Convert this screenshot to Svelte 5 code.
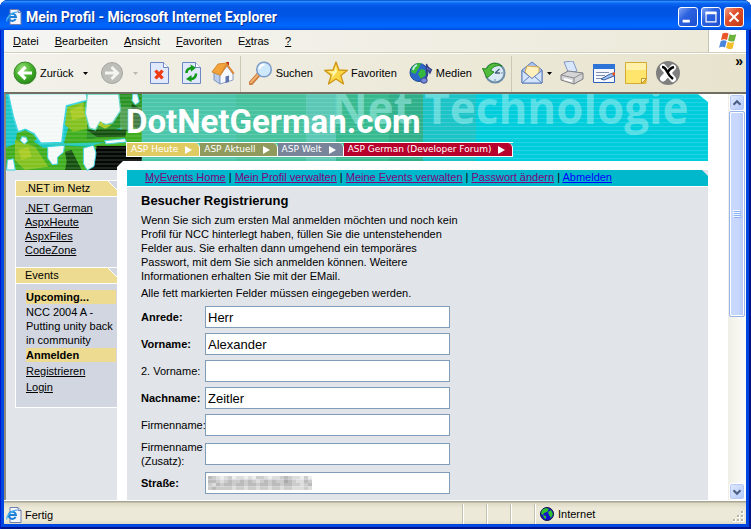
<script>
  const menus = [
    ['', 'D', 'atei'],
    ['', 'B', 'earbeiten'],
    ['', 'A', 'nsicht'],
    ['', 'F', 'avoriten'],
    ['E', 'x', 'tras'],
    ['', '?', '']
  ];
  const tabs = [
    { text: 'ASP Heute', color: '#dfcb62' },
    { text: 'ASP Aktuell', color: '#8f9a5c' },
    { text: 'ASP Welt', color: '#77849a' },
    { text: 'ASP German (Developer Forum)', color: '#b8002c' }
  ];
  const account = [
    { text: 'MyEvents Home', visited: true },
    { text: 'Mein Profil verwalten', visited: true },
    { text: 'Meine Events verwalten', visited: true },
    { text: 'Passwort ändern', visited: true },
    { text: 'Abmelden', visited: false }
  ];
  const netLinks = ['.NET German', 'AspxHeute', 'AspxFiles', 'CodeZone'];
  const fields = [
    { id: 'anrede', label: 'Anrede:', value: 'Herr', bold: true },
    { id: 'vorname', label: 'Vorname:', value: 'Alexander', bold: true },
    { id: 'vorname2', label: '2. Vorname:', value: '' },
    { id: 'nachname', label: 'Nachname:', value: 'Zeitler', bold: true },
    { id: 'firma', label: 'Firmenname:', value: '' },
    { id: 'zusatz', label: 'Firmenname (Zusatz):', value: '' },
    { id: 'strasse', label: 'Straße:', value: '', bold: true, masked: true }
  ];
  // grey level of every 4px block of the masked street, row by row
  const mosaic = [
    'bcdedceddedeccdeddcbcddece',
    'bbcdcbccbcbcdcbcbccabcddbc',
    'cdbcbbcbbcbbcbbcbbcbbccdcb',
    'cbccccdccdccdccdccdccdddcd'
  ];
</script>

{#snippet ieIcon()}
  <svg class="ie" viewBox="0 0 16 16" aria-hidden="true">
    <path d="M4 .5h8l3 3v12H4z" fill="#f4f6ff" stroke="#6f7fae" />
    <path d="M12 .5v3h3" fill="#cdd6ee" stroke="#6f7fae" />
    <path d="M9.600 9.800A3.600 3.600 0 1 1 9.900 7.900H3.300" fill="none" stroke="#1d7fd8" stroke-width="2" />
    <path d="M1 12.500C-.5 9 6 3 11 3.200" fill="none" stroke="#4ab2f0" stroke-width="1.200" />
  </svg>
{/snippet}

{#snippet caret(dim)}
  <svg class="caret" viewBox="0 0 5 3" aria-hidden="true"><path d="M0 0h5L2.500 3z" fill={dim ? '#b9b7a9' : '#000'} /></svg>
{/snippet}

<div class="window">
  <header class="title">
    {@render ieIcon()}
    <h1>Mein Profil - Microsoft Internet Explorer</h1>
    <button class="cap" aria-label="Minimieren"><svg viewBox="0 0 20 20"><path d="M4 13h8v3H4z" fill="#fff" /></svg></button>
    <button class="cap" aria-label="Maximieren"><svg viewBox="0 0 20 20"><path d="M4.500 5h11v10.500h-11z" fill="none" stroke="#fff" stroke-width="1.300" /><path d="M4 4h12v3H4z" fill="#fff" /></svg></button>
    <button class="cap close" aria-label="Schließen"><svg viewBox="0 0 20 20"><path d="M5 5l10 10M15 5L5 15" stroke="#fff" stroke-width="2.200" /></svg></button>
  </header>

  <div class="menubar">
    <nav class="menus" aria-label="Menü">
      {#each menus as [a, k, b]}<button>{a}<u>{k}</u>{b}</button>{/each}
    </nav>
    <div class="flag">
      <svg viewBox="0 0 20 18" aria-hidden="true">
        <path d="M4.500 1.500q3-1.700 6 0L9 8q-3-1.600-6 .2z" fill="#e8562a" />
        <path d="M11.500 2.200q3 1.500 6.800 0L16.500 9q-3 1.300-6.500-.4z" fill="#6cb33e" />
        <path d="M2.700 9.200q3-1.700 6-.1L7 15.600q-3-1.500-6 .1z" fill="#4a86dc" />
        <path d="M9.700 9.800q3 1.500 6.500.3L14.600 16.600q-3 1.400-6.500-.5z" fill="#f4bd2c" />
      </svg>
    </div>
  </div>

  <div class="toolbar">
    <button class="tool back">
      <svg viewBox="0 0 24 24" aria-hidden="true">
        <defs><radialGradient id="gr" cx=".4" cy=".3" r=".8"><stop offset="0" stop-color="#9be07a" /><stop offset=".5" stop-color="#45b02c" /><stop offset="1" stop-color="#1f7a14" /></radialGradient></defs>
        <circle cx="12" cy="12" r="11" fill="url(#gr)" stroke="#3c8a2c" />
        <path d="M19 12H7M12.500 6L6.500 12l6 6" fill="none" stroke="#fff" stroke-width="3.200" />
      </svg>
      Zurück {@render caret(false)}
    </button>
    <button class="tool fwd" aria-label="Vorwärts">
      <svg viewBox="0 0 24 24" aria-hidden="true">
        <circle cx="12" cy="12" r="10.500" fill="#bdbdb9" stroke="#a5a5a0" />
        <path d="M5 12h12M11.500 6l6 6-6 6" fill="none" stroke="#f4f4f0" stroke-width="3" />
      </svg>
      {@render caret(true)}
    </button>
    <button class="tool" aria-label="Abbrechen">
      <svg viewBox="0 0 24 24" aria-hidden="true">
        <path d="M3.500 1.500h13l5 5v16h-18z" fill="#dfe9fb" stroke="#6d86c4" /><path d="M16.500 1.500v5h5" fill="#fff" stroke="#6d86c4" />
        <path d="M8.500 9.500l7 8M15.500 9.500l-7 8" stroke="#f03a12" stroke-width="3.400" />
      </svg>
    </button>
    <button class="tool refresh" aria-label="Aktualisieren">
      <svg viewBox="0 0 24 24" aria-hidden="true">
        <path d="M3.500 1.500h13l5 5v16h-18z" fill="#dfe9fb" stroke="#6d86c4" /><path d="M16.500 1.500v5h5" fill="#fff" stroke="#6d86c4" />
        <path d="M7.500 12q0-4.500 5-5" fill="none" stroke="#159a1c" stroke-width="2.600" /><path d="M11.500 3.500l5.500 3.200-5 4z" fill="#159a1c" />
        <path d="M17 12.500q0 5-5 5.500" fill="none" stroke="#159a1c" stroke-width="2.600" /><path d="M12.500 14v7l-5.500-3z" fill="#159a1c" />
      </svg>
    </button>
    <button class="tool home" aria-label="Startseite">
      <svg viewBox="0 0 24 24" aria-hidden="true">
        <path d="M15 1h3v7h-3z" fill="#b82814" />
        <path d="M3 12l6 2v9l-6-4z" fill="#b9cdee" stroke="#7e92bc" /><path d="M9 14l7-9 6 8v6L9 23z" fill="#f5f8ff" stroke="#8c9fc6" />
        <path d="M1 11L7 3l9-1-7 12z" fill="#f2a33a" stroke="#d98a2c" /><path d="M16 2l7.500 10-1.500 1.500L16 5 9.500 15 8.500 14z" fill="#dd8a32" />
        <path d="M14.500 15.500l3.500-1v6.500l-3.500 1z" fill="#5d74ad" />
      </svg>
    </button>
    <span class="sep"></span>
    <button class="tool search">
      <svg viewBox="0 0 24 24" aria-hidden="true">
        <path d="M2 22l8-9" stroke="#c87a38" stroke-width="4.500" stroke-linecap="round" /><path d="M2 21.500l8-9" stroke="#f0b070" stroke-width="2" stroke-linecap="round" />
        <circle cx="15" cy="8.500" r="7.300" fill="#cfe9fc" stroke="#7c9cc8" stroke-width="1.500" /><path d="M10.500 8q1-4.500 5-4.500" stroke="#fff" stroke-width="2" fill="none" />
      </svg>
      Suchen
    </button>
    <button class="tool star">
      <svg viewBox="0 0 24 24" aria-hidden="true"><path d="M12 1l3 8 8.500.3-6.600 5.300L19.500 23 12 18l-7.500 5 2.600-8.400L.5 9.300 9 9z" fill="#fbd745" stroke="#cf9414" stroke-width="1.300" stroke-linejoin="round" /><path d="M12 5l1 6-6 7 2-5-5-3 6 .5z" fill="#fff6b0" /></svg>
      Favoriten
    </button>
    <button class="tool media">
      <svg viewBox="0 0 24 24" aria-hidden="true">
        <circle cx="10" cy="11.500" r="9" fill="#2b67c8" stroke="#1b4790" /><path d="M3 6q4-4.500 9-4l-2 5-4 6-4-2zM12 8l4 1 1 5-5 4-3-5z" fill="#35b93a" /><path d="M4 9q1-4 4-5" stroke="#c9ecf8" stroke-width="1.800" fill="none" />
        <path d="M17.500 19V3q1 4 5 5.500L21 12q-1-3-3-3" fill="#6b7fd0" stroke="#353f86" stroke-width="1.300" /><ellipse cx="15" cy="19.500" rx="3.200" ry="2.700" fill="#7789da" stroke="#353f86" />
      </svg>
      Medien
    </button>
    <button class="tool hist" aria-label="Verlauf">
      <svg viewBox="0 0 24 24" aria-hidden="true">
        <circle cx="13" cy="12" r="9.500" fill="#d8e9f5" stroke="#6c8da8" stroke-width="2" /><path d="M13 12l4.500-4M13 12h5" stroke="#49617c" stroke-width="1.300" /><path d="M13 4v2M21 12h-2M13 20v-2" stroke="#6b88a5" />
        <path d="M20 5Q10-2 4 8l-3.500-.5L5 17l7-6-3.500-1.500Q12 3 20 5z" fill="#52bd3d" stroke="#278420" />
      </svg>
    </button>
    <span class="sep"></span>
    <button class="tool mail" aria-label="E-Mail">
      <svg viewBox="0 0 24 24" aria-hidden="true">
        <path d="M2 9L12 1l10 8v13H2z" fill="#a9c4f2" stroke="#5d7cbd" /><path d="M5 11l2-6 12 1v9l-7 3z" fill="#fff0bc" stroke="#d6a850" /><path d="M2 9.500l10 8 10-8V22H2z" fill="#d4e4fb" stroke="#5d7cbd" /><path d="M2 22l8-7M22 22l-8-7" stroke="#5d7cbd" />
      </svg>
      {@render caret(false)}
    </button>
    <button class="tool print" aria-label="Drucken">
      <svg viewBox="0 0 24 24" aria-hidden="true">
        <path d="M4 1l9-1 4 10-8 3z" fill="#d9e7fc" stroke="#7f96c2" /><path d="M1 14l7-4 15 2v6l-9 5L1 19z" fill="#d5d5d5" stroke="#7d7d82" /><path d="M1 14l13 3 9-5M14 17v6" fill="none" stroke="#8b8b90" /><path d="M4 18l8 2" stroke="#fff" stroke-width="2" />
      </svg>
    </button>
    <button class="tool edit" aria-label="Bearbeiten">
      <svg viewBox="0 0 24 24" aria-hidden="true">
        <path d="M1.500 3.500h21v18h-21z" fill="#f5f8ff" stroke="#2c5db8" /><path d="M1 3h22v5H1z" fill="#2d74d6" /><path d="M4 11.500h13M4 14.500h9M4 17.500h6" stroke="#7f8fae" /><path d="M9 18l9-5 4-1v3l-10 4z" fill="#9ec4f5" stroke="#3d5c9c" /><path d="M20 12l3-1v3l-2 1z" fill="#e0552c" />
      </svg>
    </button>
    <button class="tool note" aria-label="Notiz">
      <svg viewBox="0 0 24 24" aria-hidden="true"><path d="M1.500 1.500h21v16l-1 5h-20z" fill="#ffe56c" stroke="#d3ac35" /><path d="M2 2h20v7H2z" fill="#fff2a8" /><path d="M22.500 17.500h-5v5h5z" fill="#e9bb3c" /><path d="M22.500 17.500h-5v5z" fill="#fff6c4" stroke="#c49624" /></svg>
    </button>
    <button class="tool msg" aria-label="Messenger">
      <svg viewBox="0 0 24 24" aria-hidden="true">
        <circle cx="12" cy="12" r="12" fill="#7f7f7f" />
        <path d="M7 6l10 12M17 6.500L7 17.500" stroke="#fff" stroke-width="6" fill="none" stroke-linecap="round" />
        <path d="M6 6q3 0 5 4.500t6 7.500M18 6q-5 1.500-6.500 6" stroke="#000" stroke-width="2.400" fill="none" />
      </svg>
    </button>
    <button class="more" aria-label="Weitere Symbole">»</button>
  </div>

  <div class="view">
    <div class="page">
      <div class="banner">
        <svg class="art" viewBox="18 12 423 231" aria-hidden="true">
          <rect x="18" y="12" width="407" height="228" fill="#3fae1c" />
          <path d="M18 12h34l4 80-10 70-28 10zM190 30l40 0-30 100-10 38-60 6-30-20 60-30zM285 100l60 20 30-60-20-48h15l-5 118-85 10z" fill="#18c8c8" />
          <path d="M200 50l50-15 20 80-50 10-25-20zM45 150l60 20 40 60-70 10-30-30z" fill="#83c21e" />
          <path d="M210 60l35-15 12 35-40 10zM55 180l30-10 10 30-30 10z" fill="#a8cc22" />
          <path d="M265 12h160v60l-45 35-60 20-40 20-20 0zM365 12h30v110l-25 0z" fill="#2a9424" />
          <path d="M260 120l120-2-4 22-84 2zM395 40l30 20v60l-30-10zM195 185l20-5 10 20 20 40h-50l5-25z" fill="#14500e" />
          <path d="M290 168h135v72H262l20-32z" fill="#040804" />
          <path d="M24 10h234l8 20-66 18-8 54-6 56-64 2-20-28-26-14-22 8-14-44-8-36z" fill="#f6fbfa" stroke="#35d3e0" stroke-width="5" />
          <path d="M262 12h94l6 50-24 36-20 6-18-8-14 24-18-6-12-44z" fill="#f6fbfa" stroke="#5fd6c0" stroke-width="4" />
          <path d="M294 106l8-12 10 10 24 0-20 12z" fill="#a8cc22" />
          <path d="M398 12h14l6 24-12 8-10-12zM314 152l60-6 6 10-62 6zM65 140l14 2 4 12-10 8-12-10zM143 170l50-4-2 20-18 16 0 20-16 2-14-20zM250 175l30-10 8 24-6 40-20 12-12-20zM22 210l18-4 6 34H20z" fill="#f6fbfa" stroke="#35d3e0" stroke-width="3" />
          <path d="M360 50h65v70h-65z" fill="#7fb48a" opacity=".45" />
          <path d="M120 162l140 8 60-14-60 2z" fill="#1cc6b6" />
          <path d="M18 18h407M18 30h407M18 42h407M18 54h407M18 66h407M18 78h407M18 90h407M18 102h407M18 114h407M18 126h407M18 138h407M18 150h407M18 162h407M18 174h407M18 186h407M18 198h407M18 210h407M18 222h407M18 234h407" stroke="#dfe4e4" stroke-width="3" opacity=".25" />
          <path d="M351 243v-12l18-18h72v30z" fill="#fff" />
        </svg>
        <span class="ghost" aria-hidden="true">Net Technologie</span>
        <strong class="logo">DotNetGerman.com</strong>
        <nav class="tabs" aria-label="Portale">
          {#each tabs as tab}
            <a href="#top" style:background={tab.color}>{tab.text}<svg viewBox="0 0 7 8" aria-hidden="true"><path d="M0 0l7 4-7 4z" fill="#fff" /></svg></a>
          {/each}
        </nav>
      </div>

      <div class="columns">
        <aside>
          <div class="box">
            <h2>.NET im Netz</h2>
            <ul class="links">
              {#each netLinks as text}<li><a href="#netz">{text}</a></li>{/each}
            </ul>
            <h2>Events</h2>
            <div class="events">
              <h3>Upcoming...</h3>
              <p>NCC 2004 A - Putting unity back in community</p>
              <h3>Anmelden</h3>
              <a href="#reg">Registrieren</a>
              <a href="#login">Login</a>
            </div>
          </div>
        </aside>
        <main>
          <nav class="account" aria-label="Konto">
            {#each account as item, i}{#if i > 0}{' | '}{/if}<a href="#konto" class:visited={item.visited}>{item.text}</a>{/each}
          </nav>
          <form>
            <h2>Besucher Registrierung</h2>
            <p class="intro">Wenn Sie sich zum ersten Mal anmelden möchten und noch kein Profil für NCC hinterlegt haben, füllen Sie die untenstehenden Felder aus. Sie erhalten dann umgehend ein temporäres Passwort, mit dem Sie sich anmelden können. Weitere Informationen erhalten Sie mit der EMail.</p>
            <p class="hint">Alle fett markierten Felder müssen eingegeben werden.</p>
            {#each fields as f}
              <div class="row">
                <label for={f.id} class:bold={f.bold}>{f.label}</label>
                <div class="field">
                  <input id={f.id} type="text" value={f.value} />
                  {#if f.masked}
                    <svg class="mosaic" viewBox="0 0 104 16" preserveAspectRatio="none" aria-hidden="true">
                      {#each mosaic as line, y}
                        {#each line as level, x}
                          <rect x={x * 4} y={y * 4} width="4" height="4" fill={'#' + level.repeat(3)} />
                        {/each}
                      {/each}
                    </svg>
                  {/if}
                </div>
              </div>
            {/each}
          </form>
        </main>
      </div>
    </div>
    <div class="scroll">
      <button aria-label="Nach oben"><svg viewBox="0 0 16 16"><path d="M4 10l4-4 4 4" fill="none" stroke="#4d6185" stroke-width="2.500" /></svg></button>
      <div class="thumb"><svg viewBox="0 0 8 8" aria-hidden="true"><path d="M0 .5h7M0 2.500h7M0 4.500h7M0 6.500h7" stroke="#f2f7ff" /><path d="M1 1.500h7M1 3.500h7M1 5.500h7M1 7.500h7" stroke="#8cb0f8" /></svg></div>
      <button class="down" aria-label="Nach unten"><svg viewBox="0 0 16 16"><path d="M4 6l4 4 4-4" fill="none" stroke="#4d6185" stroke-width="2.500" /></svg></button>
    </div>
  </div>

  <footer>
    <div class="status">{@render ieIcon()}Fertig</div>
    <div class="pane"></div>
    <div class="pane"></div>
    <div class="pane"></div>
    <div class="pane zone">
      <svg viewBox="0 0 14 14" aria-hidden="true"><circle cx="7" cy="7" r="6.500" fill="#1414c8" stroke="#101040" /><path d="M2 3l4-2 3 1-2 3-3 1-1 2-2-1zM8 5l3-2 2 4-2 4-2-3zM3 8l3 1v3l-2-1z" fill="#2fc52f" /></svg>
      Internet
    </div>
    <svg class="grip" viewBox="0 0 12 12" aria-hidden="true"><path d="M8 0h3v3H8zM4 4h3v3H4zM8 4h3v3H8zM0 8h3v3H0zM4 8h3v3H4zM8 8h3v3H8z" fill="#fff" /><path d="M8 0h2v2H8zM4 4h2v2H4zM8 4h2v2H8zM0 8h2v2H0zM4 8h2v2H4zM8 8h2v2H8z" fill="#b8b4a2" /></svg>
  </footer>
</div>

<style>
  :global(body) { background: #fff; }
  * { box-sizing: border-box; }
  h1, h2, h3, p, ul { margin: 0; padding: 0; font-size: inherit; }
  button { border: 0; margin: 0; padding: 0; background: none; font: inherit; color: inherit; }
  svg { display: block; flex: none; }
  .window {
    height: 100vh; display: flex; flex-direction: column; padding: 0 5px 5px 4px;
    font: 11px/14px "Liberation Sans", Arial, sans-serif; color: #000;
    border-radius: 8px 8px 0 0; overflow: hidden;
    background: #0046e0;
    box-shadow: inset 1px 0 #0019cf, inset -2px 0 #00138c, inset 0 -2px #00138c;
  }
  .title {
    height: 30px; flex: none; display: flex; align-items: center; gap: 3px;
    margin: 0 -5px 0 -4px; padding: 3px 7px 0 6px;
    background: linear-gradient(#0046c8, #2a8cff 5%, #0a64f0 12%, #0054e3 25%, #0055e6 50%, #0066ff 85%, #0062f4 92%, #0046d8);
    color: #fff;
  }
  .ie { width: 16px; height: 16px; }
  h1 { flex: 1; margin-left: 1px; font: bold 14px/16px Roboto, sans-serif; text-shadow: 1px 1px #0a2f8c; white-space: nowrap; }
  .cap { width: 20px; height: 20px; flex: none; border: 1px solid #fff; border-radius: 3px; background: linear-gradient(135deg, #7fa4f5, #2c62e0 40%, #1c4fd0); }
  .cap svg { width: 18px; height: 18px; }
  .close { background: linear-gradient(135deg, #f0a088, #e0502c 40%, #c23a14); }
  .menubar { height: 23px; flex: none; display: flex; background: linear-gradient(90deg, #f5f5f3, #ece9d8); border-bottom: 1px solid #d2ceba; }
  .menus { flex: 1; display: flex; align-items: center; gap: 16px; padding-left: 9px; }
  .flag { width: 38px; display: grid; place-items: center; background: #fff; border-left: 1px solid #c9c5b4; }
  .flag svg { width: 20px; height: 18px; }
  .toolbar { height: 39px; flex: none; display: flex; align-items: center; padding: 0 3px 0 9px; background: linear-gradient(90deg, #f2f1ea, #ece9d8 60%, #e7e3cd); border-top: 1px solid #fff; }
  .tool { display: flex; align-items: center; gap: 3px; }
  .tool > svg { width: 24px; height: 24px; }
  .tool > svg.caret { width: 5px; height: 3px; margin-left: 6px; }
  .back { margin-right: 12px; }
  .fwd { margin-right: 9px; }
  .refresh { margin-left: 8px; }
  .home { margin: 0 5px 0 8px; }
  .sep { width: 1px; align-self: stretch; margin: 2px 6px 0 0; background: #ccc8b6; }
  .search { margin-left: 2px; }
  .star { margin-left: 11px; }
  .media { margin-left: 12px; }
  .hist { margin: 0 5px 0 10px; }
  .mail { margin-left: 2px; }
  .mail > svg.caret { margin-left: 0; }
  .print, .edit, .note, .msg { margin-left: 8px; }
  .more { margin-left: auto; align-self: flex-start; font: bold 14px/14px "Liberation Sans", sans-serif; }
  .view { flex: 1; min-height: 0; display: flex; border-top: 2px solid #716f64; border-left: 2px solid #8f8c7e; background: #fff; overflow: hidden; }
  .page { flex: 1; min-width: 0; display: flex; flex-direction: column; overflow: hidden; }
  .banner {
    position: relative; height: 67px; flex: none; margin-right: 20px; padding: 13px 0 0 120px;
    background:
      repeating-linear-gradient(rgb(255 255 255 / 14%) 0 1px, transparent 1px 4px),
      linear-gradient(90deg, #4cc6aa 230px, #46c39e 230px 300px, #5ac8b4 300px 330px, #38ba90 330px 383px, #2fb08a 383px 417px, #1cc4c8 417px 470px, #00cddc 470px);
    clip-path: polygon(0 0, calc(100% - 10px) 0, 100% 8px, 100% 100%, 140px 100%, 140px 200%, 0 200%);
  }
  .art { position: absolute; left: 0; top: 0; width: 141px; height: 77px; }
  .ghost { position: absolute; left: 326px; top: 0; font: bold 44px/26px "Open Sans", sans-serif; color: rgb(170 240 240 / 50%); white-space: nowrap; }
  .logo { position: relative; display: block; height: 35px; font: bold 33px/30px Roboto, sans-serif; color: #fff; white-space: nowrap; }
  .tabs { position: relative; display: flex; width: max-content; border: 1px solid #fff; border-right: 0; }
  .tabs a { display: flex; align-items: center; gap: 7px; height: 13px; padding: 0 7px 0 4px; font: 9px/13px "DejaVu Sans", sans-serif; color: #fff; text-decoration: none; border-right: 1px solid #fff; border-top-right-radius: 5px; white-space: nowrap; }
  .tabs svg { width: 7px; height: 8px; }
  .columns { flex: 1; min-height: 0; display: flex; }
  aside { width: 111px; flex: none; padding: 19px 0 0 9px; background: #e1e4e9; }
  .box { border: 1px solid #fff; border-right: 0; background: #d1d6e0; height: 228px; }
  .box h2 { height: 16px; padding-left: 9px; font-weight: normal; line-height: 15px; background: linear-gradient(225deg, #d1d6e0 6px, #fff 6px 7px, #ecdb90 7px); border-bottom: 1px solid #fff; }
  .links { list-style: none; padding: 4px 0 10px 9px; }
  .links + h2 { border-top: 1px solid #fff; height: 17px; }
  a { color: #000; }
  .events { padding: 6px 0 0 10px; }
  .events p { margin: 1px 0 1px; }
  .events h3 { height: 14px; margin-right: 1px; background: #ecdb90; }
  .events a { display: block; width: max-content; margin-top: 2px; }
  main { flex: 1; min-width: 0; margin: 9px 20px 0 10px; background: #e1e4e9; }
  .account { height: 17px; padding-left: 18px; line-height: 15px; background: #00b8cb; border-bottom: 1px solid #fff; clip-path: polygon(0 0, calc(100% - 6px) 0, 100% 6px, 100% 100%, 0 100%); white-space: pre; }
  .account a { color: #00f; }
  .account a.visited { color: #800080; }
  form { padding: 6px 0 0 14px; }
  form h2 { margin-bottom: 4px; font: bold 13px/16px "Liberation Sans", sans-serif; }
  .intro { max-width: 320px; }
  .hint { margin: 3px 0 5px; }
  .row { display: flex; align-items: center; min-height: 24px; margin-bottom: 3px; }
  .row label { width: 64px; flex: none; }
  .bold { font-weight: bold; }
  .field { position: relative; width: 245px; }
  .field input { display: block; width: 100%; height: 22px; margin: 0; padding: 0 2px; border: 1px solid #7f9db9; border-radius: 0; background: #fff; font: 13px/18px "Liberation Sans", sans-serif; color: #000; outline: 0; }
  .mosaic { position: absolute; left: 3px; top: 4px; width: 104px; height: 14px; }
  .scroll { width: 18px; flex: none; display: flex; flex-direction: column; background: linear-gradient(90deg, #f0efe6, #fdfdfa); padding: 0 1px; }
  .scroll button { height: 17px; flex: none; display: grid; place-items: center; border: 1px solid #fff; border-radius: 3px; background: linear-gradient(135deg, #e1eafe, #b4c8fa); box-shadow: inset 0 0 0 1px #b7caf5; }
  .scroll button svg { width: 14px; height: 14px; }
  .scroll .down { margin-top: auto; }
  .thumb { height: 206px; display: grid; place-items: center; border: 1px solid #98b4ea; border-radius: 2px; background: linear-gradient(90deg, #c9d9ff, #c6d6fc 60%, #b4c8f8); box-shadow: inset 0 0 0 1px #fff; }
  .thumb svg { width: 8px; height: 8px; }
  footer { position: relative; height: 24px; flex: none; display: flex; align-items: stretch; background: linear-gradient(#fff 0 1px, #a8a594 1px 2px, #dcd8c4 3px, #ece9d8 8px 20px, #dedac6); }
  .status { flex: 1; display: flex; align-items: center; gap: 3px; padding: 5px 0 0 2px; }
  .pane { width: 24px; margin: 4px 0 0; border-left: 1px solid #c4c0ae; box-shadow: inset 1px 0 #fff; }
  .zone { width: 212px; display: flex; align-items: center; gap: 4px; padding-left: 5px; }
  .zone svg { width: 14px; height: 14px; }
  .grip { position: absolute; right: 1px; bottom: 1px; width: 12px; height: 12px; }
</style>
